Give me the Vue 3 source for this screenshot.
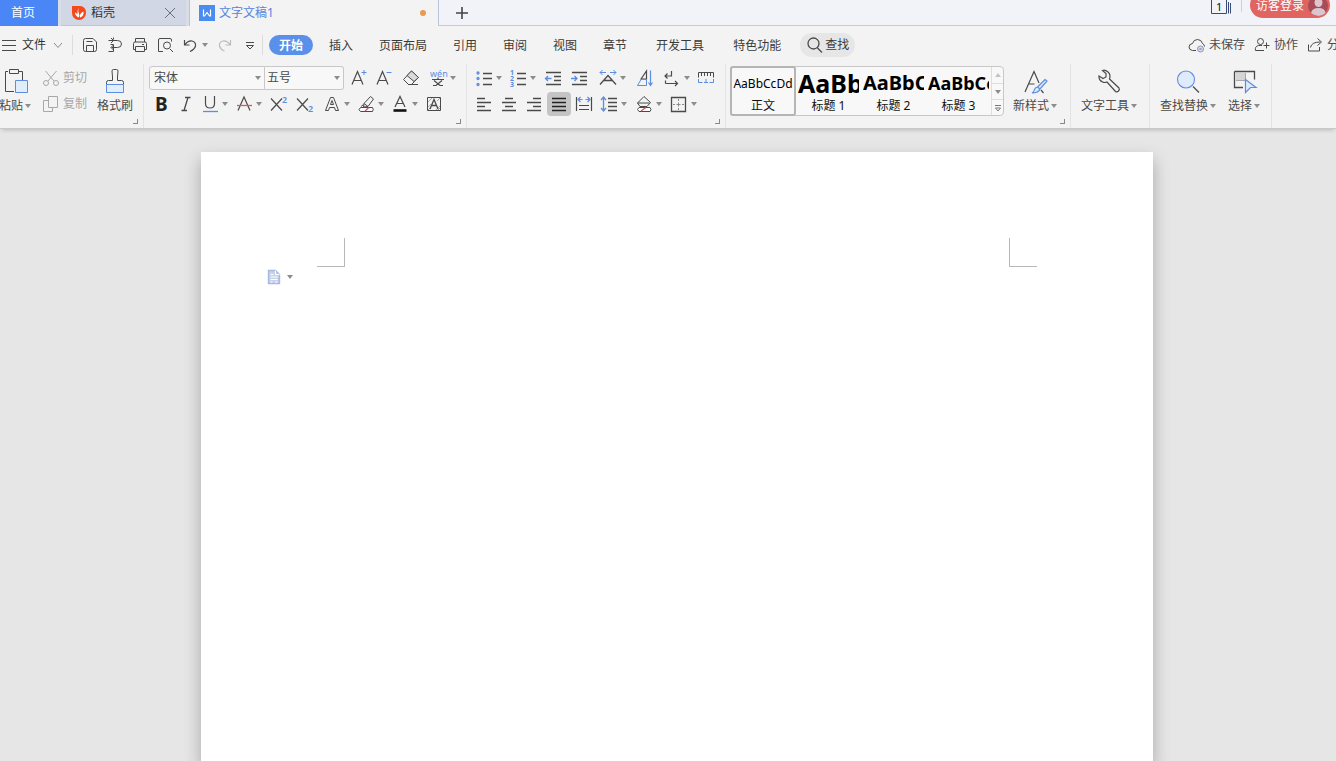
<script setup>
import { h, ref } from 'vue'

const K = '#4a4a4a'
const B = '#5b8de0'
const G = '#a8a8a8'

// Each icon: [width, height, shapes]; a shape is [d, stroke, fill, strokeWidth]
// or a text run written as { t, x, y, s, f, w }.
const icons = {
  save: [24, 24, [['M5.500 7.500q0-2 2-2H15l3.500 3.500v7.500q0 2-2 2h-9q-2 0-2-2zM8.500 18V12.500h7V18M8.500 8.500h6', K]]],
  exportDoc: [24, 24, [['M5.500 7.500h9a4 3.500 0 0 1 0 7H8.500M10.500 4.500v2M10.500 11.500v7M7.500 11.500h3M5.500 18.500h5M8 5l2.500 2.500L8 10M10.500 12l-2.500 2.500L10.500 17', K]]],
  print: [24, 24, [['M7.500 9V5.500h9V9M7.500 16.500h-2v-6q0-1.500 1.500-1.500h10q1.500 0 1.500 1.500v6h-2M7.500 13.500h9v5h-9zM14 11.500h2', K]]],
  preview: [24, 24, [['M10 18.500H5.500V7q0-1.500 1.500-1.500h10q1.500 0 1.500 1.500v1.500M17 16l3 3', K], ['M10.500 12.500a3.500 3.500 0 1 0 7 0a3.500 3.500 0 1 0-7 0', K]]],
  undo: [24, 24, [['M6.500 7v5h5M7 11.500q3-4 7-3.500q4 1 3.500 5q-1 3.500-5.500 5.500', K, 'none', 1.2]]],
  redo: [24, 24, [['M17.500 7v5h-5M17 11.500q-3-4-7-3.500q-4 1-3.500 5q1 3.500 5 5', '#bdbdbd', 'none', 1.2]]],
  more: [24, 24, [['M8 9.500h8M8.500 12.500l3.500 3.500l3.500-3.500z', K]]],
  cloud: [20, 20, [['M9 15.500H5.500q-3.500-.5-3.500-3.500t3.500-3.500q1-4 5-4t5 4q2 1 2 3', K], ['M10.500 14a3 3 0 1 0 6 0a3 3 0 1 0-6 0M12.500 13l2 2M14.500 13l-2 2', '#8d94ba', '#d9dceb']]],
  person: [20, 20, [['M5.500 6.500a3 3 0 1 0 6 0a3 3 0 1 0-6 0M12 15.500H3.500q-1-4 3-5h3.500M14.500 7.500v6M11.500 10.500h6', K]]],
  share: [20, 20, [['M3.500 9.500v6.500h11v-4M5.500 12.500q1-5.500 9.500-5.500M12.500 3.500l4 3.500l-4 3.500', K]]],
  paste: [28, 28, [['M7 4.500H4.500v20H13M17 4.500h4.500V13M8.500 2.500h9v4h-9z', K], ['M14.500 13.500h12v12h-12z', B, '#e2edfb']]],
  cut: [20, 20, [['M4.500 3l8.500 10M15.500 3l-8.500 10', G], ['M2.500 15a2.500 2.500 0 1 0 5 0a2.500 2.500 0 1 0-5 0M12.500 15a2.500 2.500 0 1 0 5 0a2.500 2.500 0 1 0-5 0', G]]],
  copy: [20, 20, [['M7.500 2.500h9v11h-9zM7.500 6.500h-5v11h9v-4', G]]],
  painter: [28, 28, [['M5.500 17.500V15.500q0-2 2-2h4V10L11 4q0-1.500 1.500-1.500h3q1.500 0 1.500 1.500l-.500 6v3.500h4q2 0 2 2v2', K], ['M5.500 17.500h17v8h-17z', B, '#e2edfb']]],
  grow: [24, 24, [['M5 18.500L10.500 5.500L16 18.500M7 14.500h7', K, 'none', 1.2], ['M14.500 6.500h5M17 4v5', B]]],
  shrink: [24, 24, [['M5 18.500L10.500 5.500L16 18.500M7 14.500h7', K, 'none', 1.2], ['M14.500 6.500h5', B]]],
  eraser: [24, 24, [['M12.500 5L19.500 11.500L12.500 18.500H9.500L4.500 13.500z', K, '#f3f3f3'], ['M12.500 5L19.500 11.500L15 15.500L8 9.500z', K, '#dadada'], ['M9 18.500h10', K]]],
  phonetic: [24, 24, [{ t: 'wén', x: 4, y: 11, s: 9, f: B }, ['M6 13.500h12M7 19.500h3l6-5M12 11.500v2M8 14.500l6 5h3', K, 'none', 1.2]]],
  bold: [24, 24, [{ t: 'B', x: 5, y: 19, s: 19, f: '#222', w: 700 }]],
  italic: [24, 24, [['M11 5.500h5.500M7.500 18.500h5.500M14 5.500L10 18.500', K, 'none', 1.3]]],
  underline: [24, 24, [['M7.500 4v7.500q0 4.500 4.500 4.500t4.500-4.500V4', K, 'none', 1.2], ['M5 19.500h15', B, 'none', 1.3]]],
  strike: [24, 24, [['M6 18.500L12 5L18 18.500', K, 'none', 1.2], ['M5 13.500h15', '#d35b69', 'none', 1.3]]],
  sup: [24, 24, [['M5 6.500l11 12M16 6.500l-11 12', K, 'none', 1.2], { t: '2', x: 16, y: 11, s: 9, f: B, w: 600 }]],
  sub: [24, 24, [['M4 6.500l11 12M15 6.500l-11 12', K, 'none', 1.2], { t: '2', x: 15, y: 20, s: 9, f: B, w: 600 }]],
  outlineA: [24, 24, [['M5.500 18.500L10.500 5.500h3L18.500 18.500h-3l-1-3h-5l-1 3zM10.500 12.500h3L12 8.500z', K]]],
  highlight: [24, 24, [['M16.500 4.500l3 2.500L14 14.500l-4.500.5L10 11.500zM10 11.500l4 3M7 14.500l2.500-2', K], ['M6.500 15.500h12q1.500 1.500 0 4h-12q-3-1.500 0-4z', K, '#fff'], ['M11 19l4-3.500', '#d35b69', 'none', 1.4]]],
  fontColor: [24, 24, [['M7 15L12 4.500L17 15M9 11.500h6', K, 'none', 1.2], ['M5.500 18.500h13', '#111', 'none', 2.6]]],
  shadeA: [24, 24, [['M5.500 5.500h13v13h-13z', K], ['M6 10l4-4M6 15l3-3M14 18l4-4M15 9l3-3M6 18l2-2M16 18l2-2', G], ['M8 17L12 7.500L16 17M9.500 13.500h5', K, 'none', 1.3]]],
  bullets: [24, 24, [['M11 7.500h9M11 12.500h9M11 18.500h9', K, 'none', 1.3], ['M5 7a1 1 0 1 0 2 0a1 1 0 1 0-2 0M5 12.500a1 1 0 1 0 2 0a1 1 0 1 0-2 0M5 18.500a1 1 0 1 0 2 0a1 1 0 1 0-2 0', B, 'none', 1.3]]],
  numbers: [24, 24, [['M11 7.500h9M11 12.500h9M11 18.500h9', K, 'none', 1.3], { t: '1', x: 4, y: 9, s: 7, f: B, w: 700 }, { t: '2', x: 4, y: 15, s: 7, f: B, w: 700 }, { t: '3', x: 4, y: 21, s: 7, f: B, w: 700 }]],
  outdent: [24, 24, [['M5 6.500h15M13 10.500h7M13 14.500h7M5 18.500h15', K, 'none', 1.3], ['M4.500 12.500h6M7 10l-2.500 2.500L7 15', B, 'none', 1.3]]],
  indent: [24, 24, [['M5 6.500h15M13 10.500h7M13 14.500h7M5 18.500h15', K, 'none', 1.3], ['M4 12.500h6M7.500 10l2.500 2.500L7.500 15', B, 'none', 1.3]]],
  charScale: [24, 24, [['M4 18.500L12 9.500L20 18.500M7.500 14.500h9', K, 'none', 1.3], ['M4 6.500h6M14 6.500h6M6.500 4L4 6.500L6.500 9M17.500 4L20 6.500L17.500 9', B]]],
  sort: [24, 24, [['M8 13L13.500 5V13z', K, 'none', 1.2], ['M4.500 19.500L8 13.500h5.500v6z', B], ['M17.500 4.500v14M15.500 16.500l2 3l2-3', B, 'none', 1.2]]],
  wrap: [24, 24, [['M11.500 5v5H5M7.500 7.500L5 10L7.500 12.500M5.500 17.500h12M15 15l2.500 2.500L15 20M5.500 14.500v3', K, 'none', 1.2]]],
  tabRuler: [24, 24, [['M4.500 11.500v-5h15v5M7.500 7v3M10.500 7v3M13.500 7v3M16.500 7v3', K], ['M4.500 13v3.500h4M12 13v3.500M10 16.500h4M19.500 13v3.500h-4', B]]],
  left: [24, 24, [['M5 6.500h8M5 10.500h14M5 14.500h8M5 18.500h14', K, 'none', 1.3]]],
  center: [24, 24, [['M8 6.500h8M5 10.500h14M8 14.500h8M5 18.500h14', K, 'none', 1.3]]],
  right: [24, 24, [['M11 6.500h8M5 10.500h14M11 14.500h8M5 18.500h14', K, 'none', 1.3]]],
  justify: [24, 24, [['M5 6.500h14M5 10.500h14M5 14.500h14M5 18.500h14', '#222', 'none', 1.3]]],
  distribute: [24, 24, [['M4.500 5v14M19.500 5v14M7 13.500h10M7 17.500h10', K, 'none', 1.2], ['M6.500 7.500h4M8.500 5l-2.500 2.500l2.500 2.500M17.500 7.500h-4M15.500 5l2.500 2.500l-2.500 2.500', B, 'none', 1.2]]],
  lineSpace: [24, 24, [['M11 6.500h9M11 10.500h9M11 14.500h9M11 18.500h9', K, 'none', 1.3], ['M6.500 5v14M4 8L6.500 5L9 8M4 16L6.500 19L9 16', B, 'none', 1.3]]],
  fill: [24, 24, [['M5.500 11L12 4.500L18.500 10.500L15 14.500H8zM5.500 11h12', K], ['M7 15.500h11q2 2 0 4H7q-3-2 0-4z', K, '#fff'], ['M9 19l5-3.500', '#d35b69', 'none', 1.3]]],
  borders: [24, 24, [['M4.500 5.500h14v14h-14z', K, 'none', 1.3], ['M11.500 7v2M11.500 10.500v4M11.500 16v2M6 12.500h2M9.500 12.500h4M15 12.500h2', '#8a8a8a']]],
  newStyle: [28, 28, [['M4 25L13 4.500L18 16M7.500 17h6M20 23l2.500 3', K, 'none', 1.2], ['M24 12.500l2 1.500l-7 8l-2.500-2zM16.500 20l2.500 2q-1.500 4-8 4q2-1 2.500-3.500q.5-2 3-2.500', B, '#dce9fa', 1.2]]],
  wrench: [28, 28, [['M7.500 3.500l3.500 3v3.500L8 11.500L4 9q-.5 4 3.500 6q2 1 4.500 0L20.500 24.500q1.500 1 3-.5t.5-3L14.500 12q1.500-4.500-1.500-7t-5.500-1.500z', K, 'none', 1.2]]],
  find: [28, 28, [['M19 19.500L25 25.500', K, 'none', 1.3], ['M3.500 12.500a8.500 8.500 0 1 0 17 0a8.500 8.500 0 1 0-17 0', B, '#dfebfb', 1.1]]],
  pick: [28, 28, [['M4.500 4.500h20v8M4.500 4.500v16H13', K, 'none', 1.3], ['M6 6h9v7H6z', 'none', '#d5d5d5'], ['M15.500 6v7.500H6', G, 'none', 1], ['M15.500 12.500l10.500 8h-5.500l-5 5z', B, '#dfebfb', 1.2]]],
  search: [20, 20, [['M3 8.500a5.500 5.500 0 1 0 11 0a5.500 5.500 0 1 0-11 0M12.500 13l4.500 4.500', K, 'none', 1.3]]],
  menu: [16, 16, [['M1 3.500h14M1 8.500h14M1 13.500h14', K]]],
  chevron: [12, 12, [['M2 4l4 4.500L10 4', '#8a8a8a']]],
  cross: [14, 14, [['M2 2l10 10M12 2L2 12', '#6b6f7a']]],
  plus: [16, 16, [['M8 2v12M2 8h12', '#444', 'none', 1.6]]],
  docer: [16, 16, [['M1 1h8a6 6 0 0 1 6 6.500a7 7 0 0 1-7 7.500a7 7 0 0 1-7-7z', 'none', '#f2491d'], ['M8 2.500q-1.500 3 0 6q1 2-.5 4q-3.500-2-3.500-5q1.500.5 2.500 2q-.5-4 1.500-7zM9 11.500q-.5-3 3.500-5q.5 5-3.500 6z', 'none', '#fff']]],
  writer: [16, 16, [['M0 0h16v16H0z', 'none', '#4a8df0'], ['M4.500 4.500v6.500h1l2.500-3.500l2.500 3.500h1V4.500', '#fff', 'none', 1.2]]],
  windows: [20, 16, [['M.5 0v13.500h15V0M17.500 2v11.500M19.500 3v10.500', '#3a4a78'], { t: '1', x: 5, y: 11, s: 11, f: '#111' }]],
  avatar: [22, 22, [['M1 11a10 10 0 1 0 20 0a10 10 0 1 0-20 0', 'none', '#a84c58'], ['M7.500 7.500a4 4.500 0 1 0 8 0a4 4.500 0 1 0-8 0M4 18q1-5 7.500-5t7 5q-3 3-7 3t-7.500-3z', 'none', '#ddc5cf']]],
  doc: [14, 16, [['M1.500 1.500h7l4 4v9h-11z', '#a9b9dd', '#c6d1ea', 1.4], ['M8.500 1.500v4h4M3.500 5.500h3M3.500 8h7M3.500 10.500h7M3.500 13h2M8 13h2.500', '#fff', 'none', 1]]],
  caret: [6, 4, [['M0 0h6L3 4z', 'none', '#8c8c8c']]],
  caretUp: [6, 4, [['M0 4h6L3 0z', 'none', '#c4c4c4']]],
  expand: [8, 8, [['M1 1.500h6', '#777'], ['M1.500 4h5L4 7z', '#777', 'none']]]
}

function Icon({ name }) {
  const [w, ht, shapes] = icons[name]
  return h('svg', { width: w, height: ht, viewBox: `0 0 ${w} ${ht}`, 'aria-hidden': 'true', fill: 'none' },
    shapes.map(s => Array.isArray(s)
      ? h('path', { d: s[0], stroke: s[1], fill: s[2] || 'none', 'stroke-width': s[3] || 1 })
      : h('text', { x: s.x, y: s.y, 'font-size': s.s, fill: s.f, 'font-weight': s.w || 400 }, s.t)))
}
Icon.props = ['name']

const font = ref('宋体')
const size = ref('五号')

const quick = [['save', '保存'], ['exportDoc', '输出'], ['print', '打印'], ['preview', '打印预览']]
const tabs = ['开始', '插入', '页面布局', '引用', '审阅', '视图', '章节', '开发工具', '特色功能']

// Tool: [icon, label, width class, has caret]
const fontTop = [['grow', '增大字号', 'mid'], ['shrink', '减小字号', ''], ['eraser', '清除格式', 'wide'], ['phonetic', '拼音指南', '', 1]]
const fontBottom = [['bold', '加粗', ''], ['italic', '倾斜', ''], ['underline', '下划线', '', 1], ['strike', '删除线', '', 1], ['sup', '上标', ''], ['sub', '下标', 'wide'], ['outlineA', '文字效果', '', 1], ['highlight', '突出显示', '', 1], ['fontColor', '字体颜色', '', 1], ['shadeA', '字符底纹', '']]
const paraTop = [['bullets', '项目符号', '', 1], ['numbers', '编号', '', 1], ['outdent', '减少缩进', 'mid'], ['indent', '增加缩进', 'mid'], ['charScale', '中文版式', 'lead', 1], ['sort', '排序', 'wide'], ['wrap', '显示标记', '', 1], ['tabRuler', '制表位', '']]
const paraBottom = [['left', '左对齐', ''], ['center', '居中', ''], ['right', '右对齐', ''], ['justify', '两端对齐', 'on'], ['distribute', '分散对齐', ''], ['lineSpace', '行距', '', 1], ['fill', '底纹颜色', '', 1], ['borders', '边框', '', 1]]
const styles = [['AaBbCcDd', '正文', 's0'], ['AaBb', '标题 1', 's1'], ['AaBbC', '标题 2', 's2'], ['AaBbCc', '标题 3', 's3']]
</script>

<template>
  <div class="app">
    <header class="titlebar">
      <button class="home">首页</button>
      <div class="tab docer">
        <Icon name="docer" /><span class="grow">稻壳</span>
        <button aria-label="关闭"><Icon name="cross" /></button>
      </div>
      <div class="tab current">
        <Icon name="writer" /><span class="grow">文字文稿1</span><i class="dot"></i>
      </div>
      <div class="rest">
        <button class="add" aria-label="新建"><Icon name="plus" /></button>
        <div class="account">
          <button aria-label="窗口"><Icon name="windows" /></button>
          <i class="bar"></i>
          <button class="login">访客登录<Icon name="avatar" /></button>
        </div>
      </div>
    </header>

    <nav class="menu">
      <button class="file"><Icon name="menu" />文件<Icon name="chevron" /></button>
      <i class="sep"></i>
      <div class="quick">
        <button v-for="q in quick" :key="q[0]" class="tool" :aria-label="q[1]"><Icon :name="q[0]" /></button>
        <button class="tool caret" aria-label="撤销"><Icon name="undo" /><Icon name="caret" /></button>
        <button class="tool" aria-label="恢复"><Icon name="redo" /></button>
        <button class="tool" aria-label="自定义"><Icon name="more" /></button>
      </div>
      <i class="sep"></i>
      <div class="tabs">
        <button v-for="(t, i) in tabs" :key="t" :class="{ active: i === 0, far: i > 6 }">{{ t }}</button>
        <button class="search"><Icon name="search" />查找</button>
      </div>
      <div class="status">
        <button><Icon name="cloud" />未保存</button>
        <button><Icon name="person" />协作</button>
        <button><Icon name="share" />分享</button>
      </div>
    </nav>

    <section class="ribbon">
      <div class="group clip">
        <button class="big"><Icon name="paste" /><span>粘贴<Icon name="caret" /></span></button>
        <div class="stack">
          <button disabled><Icon name="cut" />剪切</button>
          <button disabled><Icon name="copy" />复制</button>
        </div>
        <button class="big"><Icon name="painter" /><span>格式刷</span></button>
        <i class="launch"></i>
      </div>

      <div class="group font">
        <div>
          <div class="row">
            <label class="combo name"><select v-model="font" aria-label="字体"><option>宋体</option></select><Icon name="caret" /></label>
            <label class="combo size"><select v-model="size" aria-label="字号"><option>五号</option></select><Icon name="caret" /></label>
            <button v-for="t in fontTop" :key="t[0]" class="tool" :class="[t[2], { caret: t[3] }]" :aria-label="t[1]"><Icon :name="t[0]" /><Icon v-if="t[3]" name="caret" /></button>
          </div>
          <div class="row inset">
            <button v-for="t in fontBottom" :key="t[0]" class="tool" :class="[t[2], { caret: t[3] }]" :aria-label="t[1]"><Icon :name="t[0]" /><Icon v-if="t[3]" name="caret" /></button>
          </div>
        </div>
        <i class="launch"></i>
      </div>

      <div class="group para">
        <div>
          <div class="row">
            <button v-for="t in paraTop" :key="t[0]" class="tool" :class="[t[2], { caret: t[3] }]" :aria-label="t[1]"><Icon :name="t[0]" /><Icon v-if="t[3]" name="caret" /></button>
          </div>
          <div class="row spaced">
            <button v-for="t in paraBottom" :key="t[0]" class="tool" :class="[t[2], { caret: t[3] }]" :aria-label="t[1]"><Icon :name="t[0]" /><Icon v-if="t[3]" name="caret" /></button>
          </div>
        </div>
        <i class="launch"></i>
      </div>

      <div class="group looks">
        <div class="gallery">
          <button v-for="(s, i) in styles" :key="s[1]" class="look" :class="{ chosen: i === 0 }">
            <span class="sample" :class="s[2]">{{ s[0] }}</span><span>{{ s[1] }}</span>
          </button>
          <div class="scroller">
            <button aria-label="上一行"><Icon name="caretUp" /></button>
            <button aria-label="下一行"><Icon name="caret" /></button>
            <button aria-label="更多样式"><Icon name="expand" /></button>
          </div>
        </div>
        <button class="big"><Icon name="newStyle" /><span>新样式<Icon name="caret" /></span></button>
        <i class="launch"></i>
      </div>

      <div class="group tools">
        <button class="big"><Icon name="wrench" /><span>文字工具<Icon name="caret" /></span></button>
      </div>
      <div class="group edit">
        <button class="big"><Icon name="find" /><span>查找替换<Icon name="caret" /></span></button>
        <button class="big"><Icon name="pick" /><span>选择<Icon name="caret" /></span></button>
      </div>
    </section>

    <main class="desk">
      <article class="page">
        <div class="corners"><i></i><i></i></div>
        <button class="floating" aria-label="文档选项"><Icon name="doc" /><Icon name="caret" /></button>
      </article>
    </main>
  </div>
</template>

<style>
html, body { overflow: hidden; }
</style>

<style scoped>
.app {
  min-height: 100vh;
  display: flex;
  flex-direction: column;
  overflow: hidden;
  background: #e6e6e6;
  color: #4a4a4a;
  font: 12px/16px "Noto Sans", "Noto Sans CJK SC", sans-serif;
}
button {
  border: 0;
  padding: 0;
  background: none;
  color: inherit;
  font: inherit;
  white-space: nowrap;
  flex: none;
  display: flex;
  align-items: center;
}
svg { flex: none; display: block; }
i { flex: none; }

.titlebar { display: flex; height: 26px; background: #d9dde8; overflow: hidden; }
.home { width: 58px; background: #4a86f5; color: #fff; padding-left: 11px; margin-right: 3px; }
.tab { display: flex; align-items: center; box-sizing: border-box; }
.docer { width: 125px; padding: 0 9px 0 10px; gap: 4px; background: #d2d7e5; border-bottom: 1px solid #bfc5d8; color: #333; }
.grow { flex: 1; }
.current { width: 250px; margin-left: 3px; padding: 0 12px 0 9px; gap: 4px; background: #f3f3f3; border: solid #bfc5d8; border-width: 0 1px; color: #5584dc; }
.dot { width: 6px; height: 6px; border-radius: 50%; background: #e89a50; }
.rest { flex: 1; display: flex; justify-content: space-between; background: #f2f3f8; border-bottom: 1px solid #c3c9dc; }
.add { margin-left: 15px; }
.account { display: flex; align-items: flex-start; padding-right: 6px; }
.bar { width: 1px; height: 12px; background: #ccd0dc; margin: 0 8px 0 10px; }
.login { width: 80px; height: 26px; box-sizing: border-box; margin-top: -8px; border-radius: 13px; background: #e0645f; color: #fff; padding: 2px 1px 0 6px; justify-content: space-between; }

.menu { display: flex; align-items: center; height: 38px; background: #f3f3f3; overflow: hidden; }
.file { gap: 5px; padding-left: 1px; width: 72px; box-sizing: border-box; color: #333; }
.file svg:last-child { margin-left: 1px; }
.sep { width: 1px; height: 20px; background: #dcdcdc; }
.quick { display: flex; gap: 1px; width: 189px; padding-left: 5px; box-sizing: border-box; }
.tabs { display: flex; gap: 6px; margin-left: 6px; color: #3a3a3a; }
.tabs button { height: 20px; box-sizing: border-box; padding: 1px 10px 0; border-radius: 10px; }
.tabs .active { background: #5b90ea; color: #fff; font-weight: 700; }
.tabs .far { margin-left: 3px; }
.tabs .search { background: #e6e6e6; height: 24px; margin: -2px 0 -2px 3px; border-radius: 12px; padding: 0 6px 0 5px; }
.status { display: flex; flex: none; gap: 7px; margin: 0 -15px 0 auto; }
.status button { gap: 2px; }

.ribbon { display: flex; height: 64px; background: #f3f3f3; border-bottom: 1px solid #c9c9c9; box-shadow: 0 3px 4px -2px rgba(0, 0, 0, .2); position: relative; }
.group { position: relative; display: flex; align-items: flex-start; flex: none; box-sizing: border-box; border-right: 1px solid #e3e3e3; padding-top: 1px; }
.launch { position: absolute; right: 5px; bottom: 4px; width: 4px; height: 4px; border: solid #888; border-width: 0 1px 1px 0; }
.row { display: flex; height: 26px; align-items: center; }
.tool { width: 24px; height: 24px; justify-content: center; border-radius: 4px; }
.tool.caret { width: 34px; justify-content: flex-start; }
.tool.mid { width: 26px; }
.tool.wide { width: 30px; }
.tool.lead { margin-left: 4px; }
.tool.on { background: #c4c4c4; }
.spaced { gap: 1px; }
.inset { padding-left: 1px; }

.big { flex-direction: column; }
.big svg { margin-top: 2px; }
.big span { display: flex; align-items: center; height: 22px; gap: 2px; }
.big span svg { margin: 0; }
.stack button { height: 26px; gap: 2px; color: #a8a8a8; }

.clip { width: 144px; padding-left: 0; }
.clip .big:first-child { margin-left: -1px; }
.clip .stack { margin: 0 10px; }
.font { width: 323px; padding-left: 5px; }
.para { width: 259px; padding-left: 5px; }
.combo { display: flex; align-items: center; height: 24px; box-sizing: border-box; border: 1px solid #c8c8c8; background: #f8f8f8; padding-right: 3px; }
.combo.name { width: 116px; border-radius: 3px 0 0 3px; }
.combo.size { width: 79px; margin-right: 2px; border-radius: 0 3px 3px 0; border-left: 0; }
.combo select { flex: 1; min-width: 0; appearance: none; border: 0; background: none; font: inherit; color: inherit; padding: 0 0 0 4px; outline: 0; }
.combo.size select { padding-left: 2px; }

.looks { width: 345px; padding-left: 4px; }
.gallery { display: flex; box-sizing: border-box; height: 50px; margin: 1px 9px 0 0; border: 1px solid #c8c8c8; border-radius: 4px; background: #f8f8f8; }
.look { width: 65px; height: 48px; box-sizing: border-box; flex-direction: column; color: #111; overflow: hidden; padding: 0 2px; }
.chosen { border: 2px solid #b5b5b5; border-radius: 3px; padding: 0; height: 50px; margin: -1px 0 -1px -1px; width: 66px; }
.sample { width: 100%; height: 31px; line-height: 32px; overflow: hidden; text-align: left; color: #000; }
.s1, .s2, .s3 { font-weight: 700; }
.s0 { text-align: center; }
.s1 { font-size: 25px; }
.s2 { font-size: 20px; }
.s3 { font-size: 18px; }
.scroller { display: flex; flex-direction: column; width: 11px; border-left: 1px solid #dedede; }
.scroller button { height: 16px; justify-content: center; }
.scroller button + button { border-top: 1px solid #dedede; box-sizing: border-box; }
.tools { width: 79px; padding-left: 10px; }
.edit { width: 122px; padding-left: 10px; gap: 12px; }

.desk { flex: 1; display: flex; padding: 23px 183px 0 201px; }
.page { flex: 1; background: #fff; box-shadow: 0 8px 16px rgba(0, 0, 0, .28); }
.corners { display: flex; justify-content: space-between; padding: 86px 116px 0; }
.corners i { width: 28px; height: 29px; box-sizing: border-box; border: solid #b8b8b8; border-width: 0 1px 1px 0; }
.corners i:last-child { border-width: 0 0 1px 1px; }
.floating { gap: 6px; margin: 2px 0 0 66px; }
</style>
